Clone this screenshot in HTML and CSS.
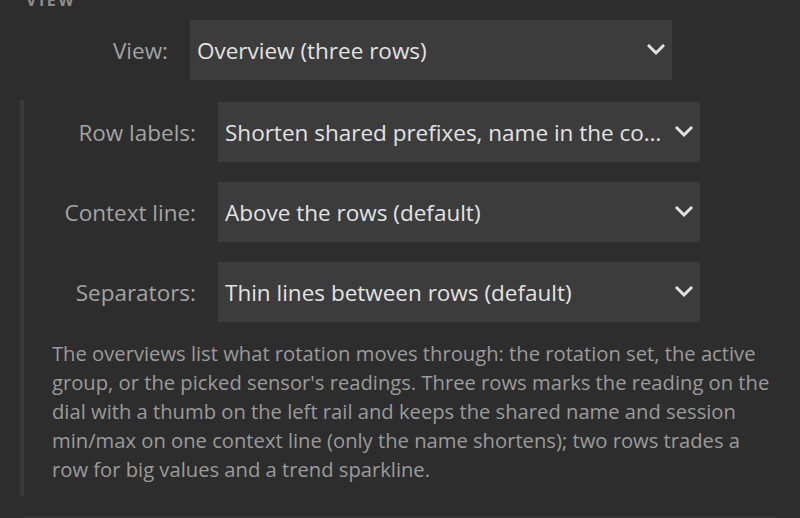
FILE: index.html
```
<!DOCTYPE html>
<html lang="en">
<head>
<meta charset="utf-8">
<title>View settings</title>
<link rel="stylesheet" href="styles.css">
</head>
<body>
<div class="page">
  <div class="section-title">VIEW</div>
  <div class="field">
    <span class="field-label">View:</span>
    <div class="select"><span class="select-value">Overview (three rows)</span><svg class="chevron" viewBox="0 0 18 12"><polyline points="2,2 9,9 16,2"/></svg></div>
  </div>
  <div class="group">
    <div class="group-fields">
      <div class="field">
        <span class="field-label">Row labels:</span>
        <div class="select"><span class="select-value">Shorten shared prefixes, name in the context line</span><svg class="chevron" viewBox="0 0 18 12"><polyline points="2,2 9,9 16,2"/></svg></div>
      </div>
      <div class="field">
        <span class="field-label">Context line:</span>
        <div class="select"><span class="select-value">Above the rows (default)</span><svg class="chevron" viewBox="0 0 18 12"><polyline points="2,2 9,9 16,2"/></svg></div>
      </div>
      <div class="field">
        <span class="field-label">Separators:</span>
        <div class="select"><span class="select-value">Thin lines between rows (default)</span><svg class="chevron" viewBox="0 0 18 12"><polyline points="2,2 9,9 16,2"/></svg></div>
      </div>
    </div>
    <p class="desc">The overviews list what rotation moves through: the rotation set, the active group, or the picked sensor's readings. Three rows marks the reading on the dial with a thumb on the left rail and keeps the shared name and session min/max on one context line (only the name shortens); two rows trades a row for big values and a trend sparkline.</p>
  </div>
  <div class="divider"></div>
</div>
</body>
</html>
```
FILE: styles.css
```
html, body {
  margin: 0;
  padding: 0;
  background: #2d2d2d;
  height: 100%;
  overflow: hidden;
}
body {
  font-family: "Open Sans", "Noto Sans", sans-serif;
}
.page {
  padding: 0 24px;
  margin-top: -10px;
}
.section-title {
  font-size: 16px;
  line-height: 20px;
  font-weight: 700;
  letter-spacing: 2.5px;
  color: #8c8c8c;
  padding-left: 2px;
}
.field {
  display: grid;
  grid-template-columns: 144px 482px;
  column-gap: 22px;
  align-items: center;
}
.section-title + .field {
  margin-top: 10px;
}
.field-label {
  text-align: right;
  font-size: 22.5px;
  color: #a3a3a3;
  white-space: nowrap;
}
.select {
  height: 60px;
  background: #3c3c3c;
  display: flex;
  align-items: center;
  padding: 0 7px 0 7px;
  box-sizing: border-box;
  gap: 12px;
}
.select-value {
  flex: 1;
  min-width: 0;
  font-size: 22.5px;
  color: #e2e2e2;
  white-space: nowrap;
  overflow: hidden;
  text-overflow: ellipsis;
}
.chevron {
  width: 18px;
  height: 12px;
  flex: none;
  fill: none;
  stroke: #e2e2e2;
  stroke-width: 3;
  stroke-linecap: square;
}
.group {
  margin-top: 20px;
  margin-left: -4px;
  border-left: 4px solid #3a3a3a;
  padding: 2px 0 12px 28px;
}
.group-fields {
  display: flex;
  flex-direction: column;
  gap: 20px;
}
.desc {
  margin: 17px 0 0 0;
  font-size: 20.2px;
  line-height: 29px;
  color: #9b9b9b;
}
.divider {
  margin-top: 21px;
  height: 3px;
  background: #3a3a3a;
}
```
